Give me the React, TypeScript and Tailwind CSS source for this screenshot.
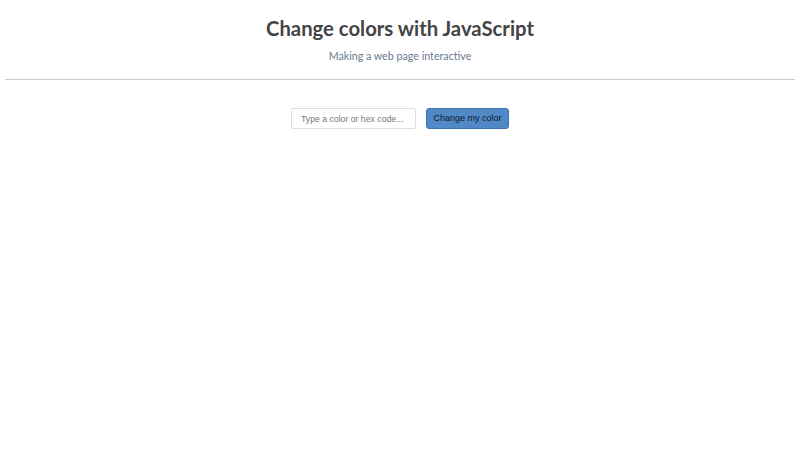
export default function App() {
  return (
    <div className="min-h-screen bg-white px-[5px] font-['Lato',sans-serif]">
      <header className="pt-[14px] text-center">
        <h1 className="text-[20.3px] font-bold leading-[28px] text-[#444444]">
          Change colors with JavaScript
        </h1>
        <p className="mt-[7px] text-[10.7px] leading-[14px] text-[#6a7a8e]">
          Making a web page interactive
        </p>
      </header>
      <hr className="mt-[16px] border-0 border-t border-[#cccccc]" />
      <div className="mt-[28px] flex justify-center gap-[10px] font-['Liberation_Sans',Arial,sans-serif]">
        <input
          type="text"
          placeholder="Type a color or hex code..."
          className="h-[21px] w-[125px] rounded-[2px] border border-[#dddddd] px-[9px] text-[8.7px] text-[#555] placeholder:text-[#777777] outline-none"
        />
        <button className="h-[21px] w-[83px] rounded-[3px] border border-[#3f76ad] bg-[#5089c6] text-[9px] text-[#111a2a]">
          Change my color
        </button>
      </div>
    </div>
  );
}
